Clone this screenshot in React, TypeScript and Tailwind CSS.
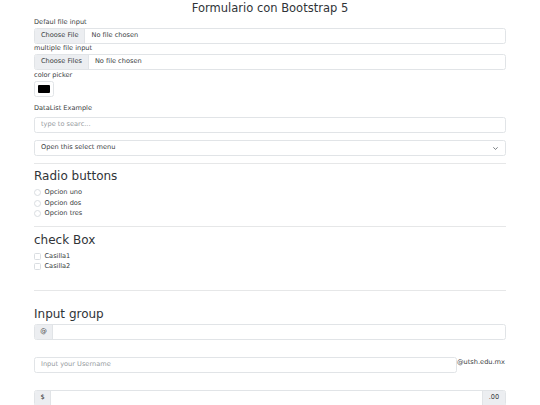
import React from 'react';

const border = 'border border-[#e1e4e7] rounded-[2.5px]';

function Label({ children, className = '' }: { children: React.ReactNode; className?: string }) {
  return <div className={`h-[8px] flex items-center leading-none ${className}`}>{children}</div>;
}

function FileInput({ button, className = '' }: { button: string; className?: string }) {
  return (
    <div className={`h-[16px] flex items-stretch overflow-hidden ${border}`+ ` ${className}`}>
      <div className="bg-[#eceef1] border-r border-[#e1e4e7] px-[6px] flex items-center">{button}</div>
      <div className="px-[6px] flex items-center">No file chosen</div>
    </div>
  );
}

function Heading({ children, className = '' }: { children: React.ReactNode; className?: string }) {
  return <div className={`h-[14px] flex items-center text-[12px] leading-none text-[#303438] ${className}`}>{children}</div>;
}

function Option({ label, round }: { label: string; round?: boolean }) {
  return (
    <div className="h-[10.7px] flex items-center gap-[3.5px]">
      <span
        className={`w-[7px] h-[7px] border border-[#d9dde1] bg-white ${round ? 'rounded-full' : 'rounded-[1.5px]'}`}
      />
      <span className="leading-none">{label}</span>
    </div>
  );
}

function Rule({ className = '' }: { className?: string }) {
  return <div className={`border-t border-[#e6e7e8] ${className}`} />;
}

export default function App() {
  return (
    <div className="w-[540px] h-[405px] overflow-hidden bg-white text-[#3a3e42] text-[6.6px] font-['DejaVu_Sans',sans-serif]">
      <div className="h-[18px] flex items-center justify-center text-[11.5px] leading-none text-[#303438]">
        Formulario con Bootstrap 5
      </div>

      <div className="mx-[34px] flex flex-col">
        <Label>Defaul file input</Label>
        <FileInput button="Choose File" className="mt-[2px]" />
        <Label>multiple file input</Label>
        <FileInput button="Choose Files" className="mt-[2px]" />
        <Label className="mt-[1px]">color picker</Label>
        <div className={`mt-[2px] w-[20px] h-[15.5px] px-[3px] py-[2.5px] flex ${border}`}>
          <div className="flex-1 bg-black rounded-[1px]" />
        </div>

        <Label className="mt-[7.5px]">DataList Example</Label>
        <div className={`mt-[5px] h-[16px] px-[6px] flex items-center text-[#959a9e] ${border}`}>type to searc...</div>
        <div className={`mt-[7px] h-[16px] px-[6px] flex items-center justify-between ${border}`}>
          <span>Open this select menu</span>
          <svg width="5" height="3" viewBox="0 0 5 3" className="mr-[1.5px]">
            <path d="M0.6 0.6 L2.5 2.4 L4.4 0.6" stroke="#5a5f64" strokeWidth="0.8" fill="none" strokeLinecap="round" />
          </svg>
        </div>

        <Rule className="mt-[7px]" />
        <Heading className="mt-[5px]">Radio buttons</Heading>
        <div className="mt-[4px] flex flex-col">
          <Option label="Opcion uno" round />
          <Option label="Opcion dos" round />
          <Option label="Opcion tres" round />
        </div>

        <Rule className="mt-[7px]" />
        <Heading className="mt-[6px]">check Box</Heading>
        <div className="mt-[3.7px] flex flex-col">
          <Option label="Casilla1" />
          <Option label="Casilla2" />
        </div>

        <Rule className="mt-[18px]" />
        <Heading className="mt-[16px]">Input group</Heading>
        <div className={`mt-[3px] h-[16px] flex items-stretch overflow-hidden ${border}`}>
          <div className="w-[18px] bg-[#eceef1] border-r border-[#e1e4e7] flex items-center justify-center">@</div>
          <div className="flex-1" />
        </div>

        <div className="mt-[17px] flex items-start">
          <div className={`w-[423px] h-[16px] px-[6px] flex items-center text-[#959a9e] ${border}`}>Input your Username</div>
          <span className="pt-[2px] leading-none">@utsh.edu.mx</span>
        </div>

        <div className={`mt-[16.7px] h-[16px] flex items-stretch overflow-hidden ${border}`}>
          <div className="w-[16px] bg-[#eceef1] border-r border-[#e1e4e7] flex items-center justify-center">$</div>
          <div className="flex-1" />
          <div className="w-[23px] bg-[#eceef1] border-l border-[#e1e4e7] flex items-center justify-center">.00</div>
        </div>
      </div>
    </div>
  );
}
